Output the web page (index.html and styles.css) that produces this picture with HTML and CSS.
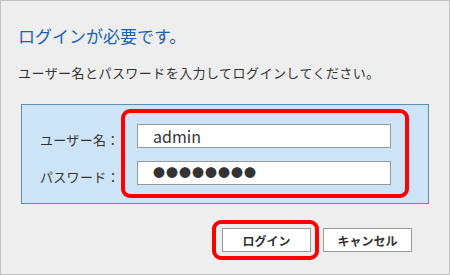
FILE: index.html
```html
<!DOCTYPE html>
<html lang="ja">
<head>
<meta charset="utf-8">
<title>ログイン</title>
<link rel="stylesheet" href="styles.css">
</head>
<body>
<div class="dialog">
  <h1 class="title">ログインが必要です。</h1>
  <p class="lead">ユーザー名とパスワードを入力してログインしてください。</p>
  <div class="panel">
    <div class="labels">
      <span class="label">ユーザー名：</span>
      <span class="label">パスワード：</span>
    </div>
    <div class="highlight fields">
      <div class="field">admin</div>
      <div class="field dots">●●●●●●●●</div>
    </div>
  </div>
  <div class="actions">
    <div class="highlight btn-wrap">
      <button class="btn" type="button">ログイン</button>
    </div>
    <button class="btn" type="button">キャンセル</button>
  </div>
</div>
</body>
</html>
```

FILE: styles.css
```css
* { box-sizing: border-box; }
html, body { margin: 0; padding: 0; }
body {
  font-family: "Noto Sans CJK JP", "Noto Sans", sans-serif;
  color: #333;
  background: #eeeeee;
}
.dialog {
  width: 450px;
  height: 275px;
  border: 1px solid #c2c2c2;
  background: #eeeeee;
  padding: 25px 20px 0 17px;
}
.title {
  margin: 0;
  font-size: 17px;
  line-height: 20px;
  font-weight: 400;
  color: #1a62b5;
}
.lead {
  margin: 18px 0 0;
  font-size: 13px;
  line-height: 18px;
  letter-spacing: 0.45px;
}
.panel {
  margin: 22px 0 0 3px;
  width: 408px;
  height: 100px;
  border: 1px solid #5a90ad;
  background: #cde4f6;
  padding: 4px 19px 5px 0;
  display: flex;
}
.labels {
  width: 99px;
  padding: 19px 0 0 18px;
  display: flex;
  flex-direction: column;
  gap: 13px;
}
.label {
  height: 24px;
  line-height: 24px;
  font-size: 13px;
  letter-spacing: 0.3px;
  white-space: nowrap;
}
.highlight {
  border: 4px solid #ff0000;
  border-radius: 9px;
}
.fields {
  width: 288px;
  padding: 11px 14px 9px 12px;
  display: flex;
  flex-direction: column;
  gap: 13px;
}
.field {
  width: 254px;
  height: 24px;
  border: 1px solid #999;
  background: #fff;
  padding-left: 15px;
  font-size: 16px;
  line-height: 22px;
  color: #333;
}
.field.dots {
  font-size: 12px;
  letter-spacing: 1px;
}
.actions {
  margin-top: 16px;
  padding-right: 17px;
  display: flex;
  justify-content: flex-end;
  align-items: center;
  gap: 4px;
}
.btn-wrap {
  padding: 4px 4px 4px 6px;
}
.btn {
  width: 89px;
  height: 24px;
  margin: 0;
  padding: 0;
  border: 1px solid #999;
  background: #fff;
  font-family: "Noto Sans CJK JP", "Noto Sans", sans-serif;
  font-size: 12px;
  font-weight: 700;
  color: #333;
  display: block;
}
```
